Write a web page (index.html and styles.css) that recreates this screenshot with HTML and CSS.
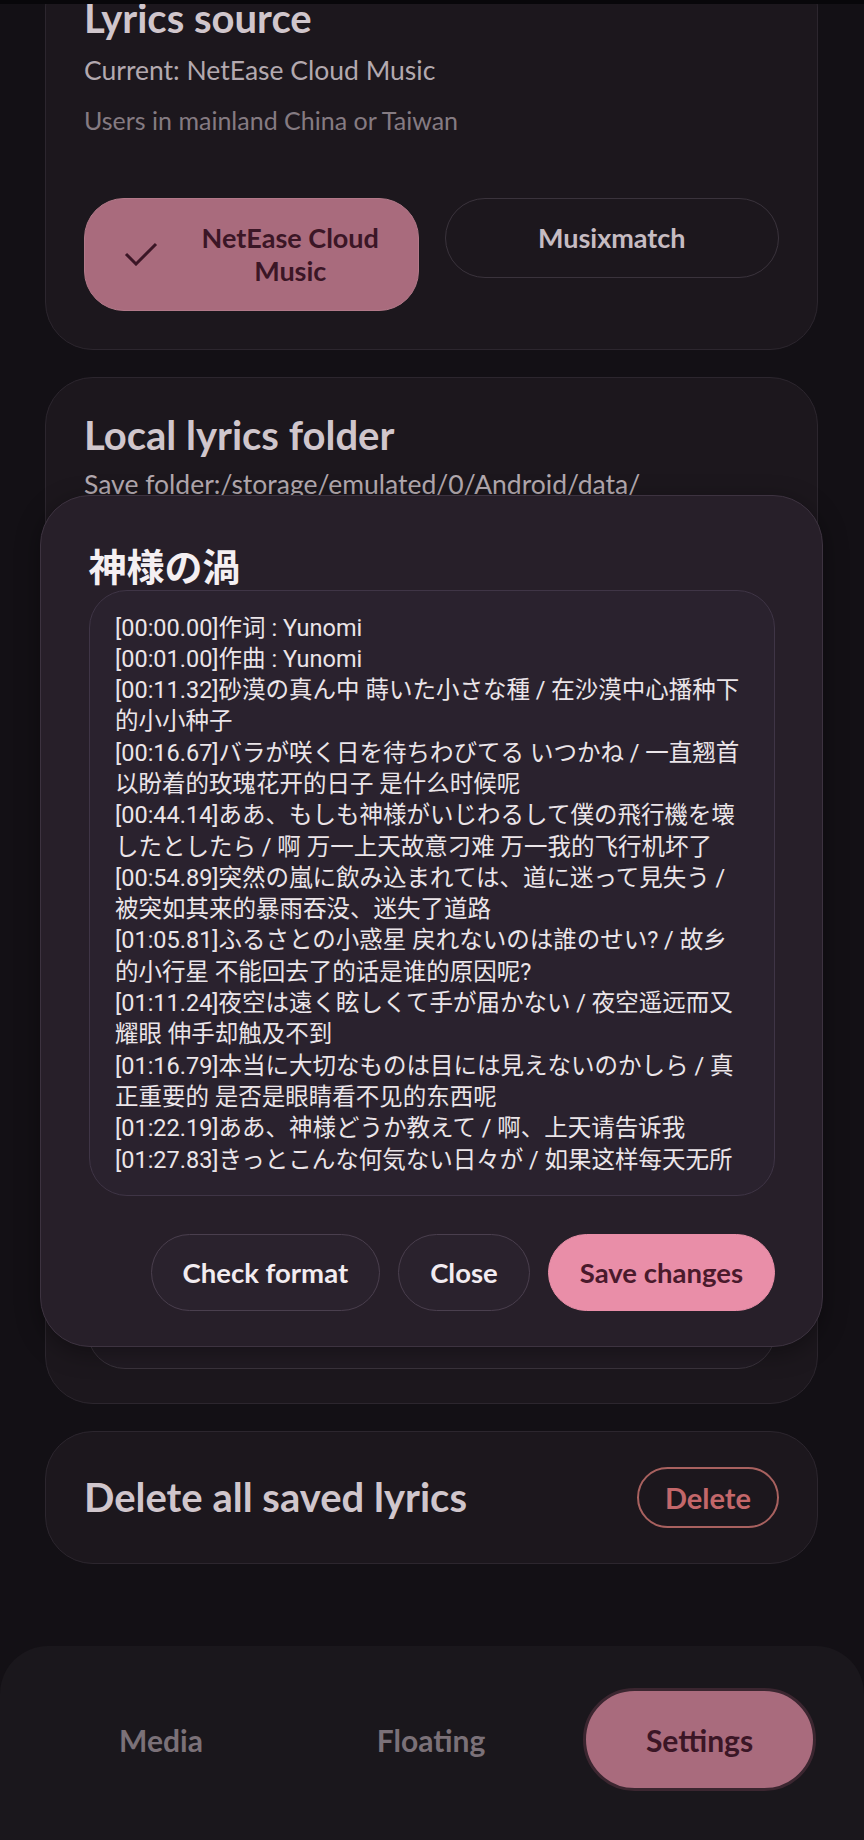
FILE: index.html
```html
<!DOCTYPE html>
<html lang="en">
<head>
    <meta charset="UTF-8">
    <meta name="viewport" content="width=device-width, initial-scale=1.0">
    <title>Settings</title>
    <link rel="stylesheet" href="styles.css">
</head>
<body>

    <div class="screen">
        <div class="status-bar"></div>

        <div class="scroll">
            <div class="cards">
                <section class="card source-card">
                    <h2 class="card-title">Lyrics source</h2>
                    <p class="card-text">Current: NetEase Cloud Music</p>
                    <p class="card-hint">Users in mainland China or Taiwan</p>
                    <div class="source-options">
                        <button class="source-btn selected">
                            <svg class="check" viewBox="0 0 34 24"><path d="M2 12 L12 22 L32 2"/></svg>
                            <span>NetEase Cloud<br>Music</span>
                        </button>
                        <button class="source-btn">Musixmatch</button>
                    </div>
                </section>

                <section class="card folder-card">
                    <h2 class="card-title">Local lyrics folder</h2>
                    <p class="card-text">Save folder:/storage/emulated/0/Android/data/</p>
                    <div class="saved-list"></div>
                </section>

                <section class="card delete-card">
                    <h2 class="card-title">Delete all saved lyrics</h2>
                    <button class="delete-btn">Delete</button>
                </section>
            </div>
        </div>

        <nav class="bottom-nav">
            <div class="nav-item">Media</div>
            <div class="nav-item">Floating</div>
            <div class="nav-item active">Settings</div>
        </nav>

        <!-- lyrics editor dialog -->
        <div class="dialog">
            <h3 class="dialog-title">神様の渦</h3>
            <div class="lyrics-box">
                <div class="lyrics">
                    <div>[00:00.00]作词 : Yunomi</div>
                    <div>[00:01.00]作曲 : Yunomi</div>
                    <div>[00:11.32]砂漠の真ん中 蒔いた小さな種 / 在沙漠中心播种下</div>
                    <div>的小小种子</div>
                    <div>[00:16.67]バラが咲く日を待ちわびてる いつかね / 一直翘首</div>
                    <div>以盼着的玫瑰花开的日子 是什么时候呢</div>
                    <div>[00:44.14]ああ、もしも神様がいじわるして僕の飛行機を壊</div>
                    <div>したとしたら / 啊 万一上天故意刁难 万一我的飞行机坏了</div>
                    <div>[00:54.89]突然の嵐に飲み込まれては、道に迷って見失う /</div>
                    <div>被突如其来的暴雨吞没、迷失了道路</div>
                    <div>[01:05.81]ふるさとの小惑星 戻れないのは誰のせい? / 故乡</div>
                    <div>的小行星 不能回去了的话是谁的原因呢?</div>
                    <div>[01:11.24]夜空は遠く眩しくて手が届かない / 夜空遥远而又</div>
                    <div>耀眼 伸手却触及不到</div>
                    <div>[01:16.79]本当に大切なものは目には見えないのかしら / 真</div>
                    <div>正重要的 是否是眼睛看不见的东西呢</div>
                    <div>[01:22.19]ああ、神様どうか教えて / 啊、上天请告诉我</div>
                    <div>[01:27.83]きっとこんな何気ない日々が / 如果这样每天无所</div>
                </div>
            </div>
            <div class="dialog-actions">
                <button class="dialog-btn">Check format</button>
                <button class="dialog-btn">Close</button>
                <button class="dialog-btn primary">Save changes</button>
            </div>
        </div>
    </div>

</body>
</html>
```

FILE: styles.css
```css
* {
    box-sizing: border-box;
}
body {
    margin: 0;
    background: #131015;
    font-family: "Lato", "Noto Sans CJK SC", sans-serif;
    color: #d0c6cc;
}
.screen {
    position: relative;
    width: 864px;
    height: 1840px;
    display: flex;
    flex-direction: column;
    overflow: hidden;
}
.status-bar {
    height: 4px;
    flex-shrink: 0;
    background: #08070a;
}
.scroll {
    flex: 1;
    overflow: hidden;
}
.cards {
    margin-top: -45px;
    padding: 0 46px 0 45px;
    display: flex;
    flex-direction: column;
    gap: 27px;
}
.card {
    background: #1c171d;
    border: 1.5px solid #2c262e;
    border-radius: 48px;
}
.card-title {
    margin: 0;
    font-size: 40px;
    line-height: 48px;
    font-weight: 700;
    color: #d0c6cc;
}
.card-text {
    margin: 12px 0 0;
    font-size: 26.5px;
    line-height: 32px;
    color: #b3a9af;
}
.card-hint {
    margin: 19px 0 0;
    font-size: 25px;
    line-height: 30px;
    color: #857b82;
}

.source-card {
    padding: 34px 38px 38px 38px;
}
.source-options {
    margin-top: 62.5px;
    display: flex;
    gap: 26px;
    align-items: flex-start;
}
.source-btn {
    flex: 1;
    display: flex;
    align-items: center;
    justify-content: center;
    gap: 44px;
    padding: 22.5px 20px;
    border: 1.5px solid #3a333c;
    border-radius: 40px;
    background: transparent;
    font-family: inherit;
    font-size: 27px;
    line-height: 33px;
    font-weight: 700;
    color: #c6bcc2;
}
.source-btn.selected {
    background: #a96b7d;
    border-color: #b27989;
    color: #3b1626;
}
.check {
    width: 34px;
    height: 24px;
    fill: none;
    stroke: #3b1626;
    stroke-width: 3;
}

.folder-card {
    height: 1027px;
    padding: 33.5px 38px 34px;
    display: flex;
    flex-direction: column;
}
.folder-card .card-text {
    margin-top: 9px;
}
.saved-list {
    margin: auto 3px 0;
    height: 420px;
    background: #211b23;
    border: 1.5px solid #3a333c;
    border-radius: 38px;
}

.delete-card {
    height: 133px;
    padding: 0 38px;
    display: flex;
    align-items: center;
    justify-content: space-between;
}
.delete-btn {
    width: 142px;
    height: 61px;
    border: 2px solid #a8615f;
    border-radius: 31px;
    background: transparent;
    font-family: inherit;
    font-size: 29px;
    font-weight: 700;
    color: #c3676a;
}

.bottom-nav {
    height: 194px;
    flex-shrink: 0;
    background: #1a171c;
    border-radius: 48px 48px 0 0;
    padding: 42px 0 0 30px;
    display: grid;
    grid-template-columns: 262px 278px 246px;
    align-items: start;
}
.nav-item {
    height: 103px;
    display: flex;
    align-items: center;
    justify-content: center;
    font-size: 30px;
    font-weight: 700;
    color: #7b7178;
}
.nav-item.active {
    justify-self: end;
    width: 233px;
    background: #a96b7d;
    border: 3px solid #3b2630;
    border-radius: 52px;
    color: #3b1626;
}

.dialog {
    position: absolute;
    left: 40px;
    top: 495px;
    width: 783px;
    height: 852px;
    background: #271f29;
    border: 1.5px solid #3d3340;
    border-radius: 50px;
    padding: 47px 47px 34.5px 47.5px;
    display: flex;
    flex-direction: column;
    box-shadow: 0 6px 24px rgba(0, 0, 0, 0.35);
}
.dialog-title {
    margin: 0;
    font-family: "Noto Sans CJK JP", sans-serif;
    font-size: 38px;
    line-height: 44px;
    font-weight: 700;
    color: #f4eff2;
}
.lyrics-box {
    margin-top: 2.5px;
    height: 606px;
    flex-shrink: 0;
    background: #2a222e;
    border: 1.5px solid #3f3546;
    border-radius: 38px;
    padding: 22px 16px 0 25.5px;
    overflow: hidden;
}
.lyrics {
    height: 563px;
    overflow: hidden;
    font-family: "Roboto", "Noto Sans CJK SC", sans-serif;
    font-size: 23.5px;
    line-height: 31.3px;
    color: #ebe5e9;
    white-space: nowrap;
}
.dialog-actions {
    margin-top: 38px;
    display: flex;
    justify-content: flex-end;
    gap: 18px;
}
.dialog-btn {
    height: 77px;
    padding: 0 31px;
    border: 1.5px solid #4a3f4e;
    border-radius: 39px;
    background: #2a222d;
    font-family: inherit;
    font-size: 27.5px;
    font-weight: 700;
    color: #f2ecf0;
}
.dialog-btn.primary {
    background: #e98ea8;
    border-color: #e98ea8;
    color: #4a1a2c;
}
```
